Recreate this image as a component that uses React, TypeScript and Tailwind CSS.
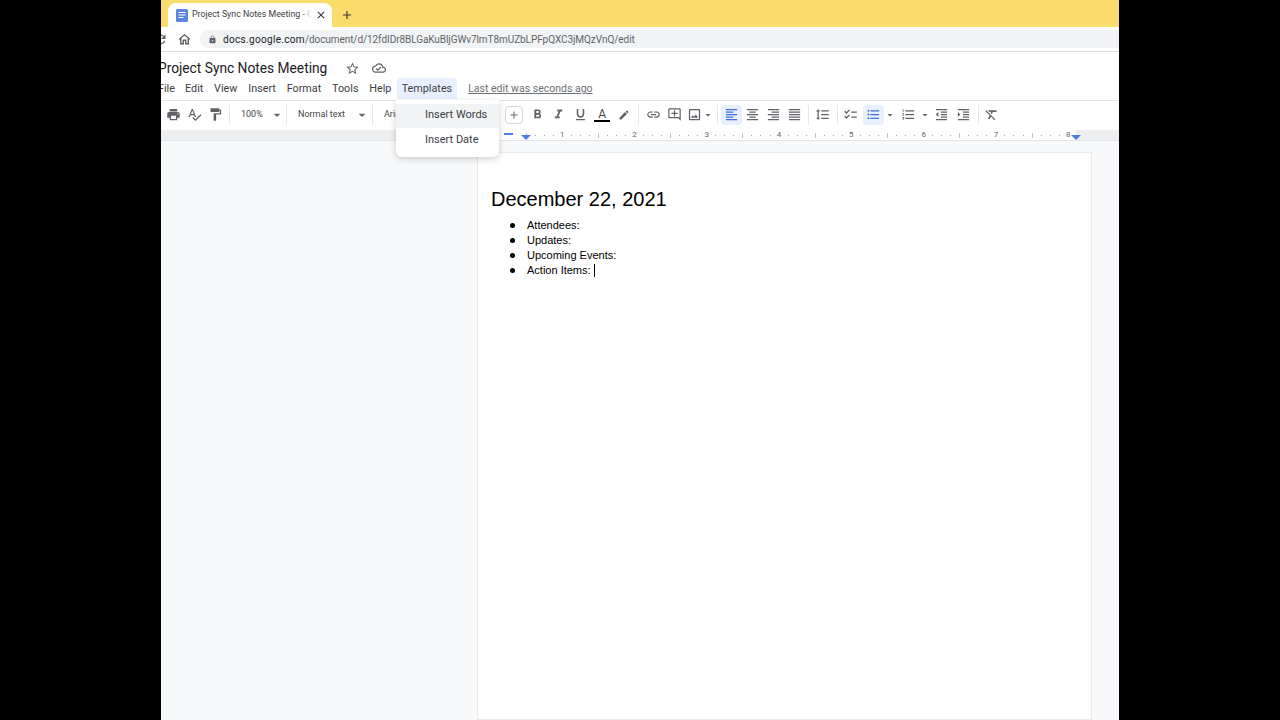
import React from "react";
import {
  MdAdd,
  MdArrowDropDown,
  MdChecklist,
  MdClose,
  MdEdit,
  MdFormatAlignCenter,
  MdFormatAlignJustify,
  MdFormatAlignLeft,
  MdFormatAlignRight,
  MdFormatBold,
  MdFormatClear,
  MdFormatIndentDecrease,
  MdFormatIndentIncrease,
  MdFormatItalic,
  MdFormatLineSpacing,
  MdFormatListBulleted,
  MdFormatListNumbered,
  MdFormatPaint,
  MdFormatUnderlined,
  MdLink,
  MdLock,
  MdOutlineAddComment,
  MdOutlineCloudDone,
  MdOutlineHome,
  MdOutlineImage,
  MdPrint,
  MdRefresh,
  MdSpellcheck,
  MdStarBorder,
} from "react-icons/md";

const menus = ["Edit", "View", "Insert", "Format", "Tools", "Help"];
const rulerNumbers = [1, 2, 3, 4, 5, 6, 7, 8];
const rulerCells = [0, 1, 2, 3, 4, 5, 6, 7];
const bullets = ["Attendees:", "Updates:", "Upcoming Events:", "Action Items:"];

const Divider = () => <div className="w-px h-5 bg-[#e3e5e8] shrink-0" />;

const Caret = () => (
  <MdArrowDropDown className="text-[#5f6368] w-4 h-4 shrink-0" />
);

const Tool: React.FC<{
  children: React.ReactNode;
  active?: boolean;
  className?: string;
}> = ({ children, active, className }) => (
  <div
    className={`w-[21px] h-5 flex items-center justify-center shrink-0 rounded-sm text-[15px] ${
      active ? "bg-[#e8f0fe] text-[#3f6fd8]" : "text-[#5f6368]"
    } ${className ?? ""}`}
  >
    {children}
  </div>
);

export default function App() {
  return (
    <div className="h-screen bg-black flex justify-center overflow-hidden font-['Roboto',sans-serif]">
      <div className="relative w-[958px] h-full bg-white overflow-hidden flex flex-col">
        {/* Tab strip */}
        <div className="h-[27px] bg-[#f9dc6c] flex items-end pl-[7px] shrink-0">
          <div className="w-[164px] h-6 bg-white rounded-t-lg flex items-center pl-[8px] pr-[5px]">
            <svg viewBox="0 0 12 13" className="w-3 h-[13px] shrink-0">
              <rect width="12" height="13" rx="1.5" fill="#5b84dc" />
              <path d="M2.5 3.5h7M2.5 6h7M2.5 8.5h5" stroke="#fff" strokeWidth="1.1" />
            </svg>
            <div className="relative ml-[4px] flex-1 overflow-hidden">
              <span className="block text-[8.8px] text-[#3c4043] whitespace-nowrap">
                Project Sync Notes Meeting - Goo
              </span>
              <div className="absolute right-0 top-0 w-[10px] h-full bg-gradient-to-r from-transparent to-white" />
            </div>
            <MdClose className="w-3 h-3 ml-[4px] text-[#303134] shrink-0" />
          </div>
          <MdAdd className="w-[14px] h-[14px] ml-2 mb-[5px] text-[#3c3c34]" />
        </div>

        {/* Address bar */}
        <div className="h-[25px] flex items-center border-b border-[#dadce0] shrink-0">
          <MdRefresh className="w-[15px] h-[15px] -ml-[8px] text-[#5f6368]" />
          <MdOutlineHome className="w-[15px] h-[15px] ml-[9px] text-[#4a4d51]" />
          <div className="ml-[8px] flex-1 h-[18px] bg-[#f1f3f4] rounded-l-full flex items-center pl-[8px]">
            <MdLock className="w-[9px] h-[9px] text-[#5f6368]" />
            <span className="ml-[6px] text-[10px] text-[#5f6368] whitespace-nowrap tracking-[-0.07px]">
              <span className="text-[#202124] tracking-[0.32px]">docs.google.com</span>
              /document/d/12fdIDr8BLGaKuBljGWv7lmT8mUZbLPFpQXC3jMQzVnQ/edit
            </span>
          </div>
        </div>

        {/* Title */}
        <div className="h-[26px] pt-[6px] flex items-center shrink-0">
          <span className="-ml-[3px] text-[13.75px] text-[#202124] whitespace-nowrap">
            Project Sync Notes Meeting
          </span>
          <MdStarBorder className="w-[15px] h-[15px] ml-[18px] text-[#5f6368]" />
          <MdOutlineCloudDone className="w-[14px] h-[14px] ml-[12px] text-[#5f6368]" />
        </div>

        {/* Menu bar */}
        <div className="h-[23px] flex items-center text-[10.8px] text-[#3c4043] shrink-0 border-b border-[#e3e5e8]">
          <span className="-ml-[3px] w-[27px] shrink-0">File</span>
          {menus.map((m) => (
            <span key={m} className="mr-[10.8px]">
              {m}
            </span>
          ))}
          <span className="-ml-[5.5px] h-[21px] pt-[1px] self-start px-[5px] flex items-center bg-[#e8f0fe] rounded-t-sm">
            Templates
          </span>
          <span className="ml-[11px] text-[10.5px] text-[#6b6f74] underline whitespace-nowrap">
            Last edit was seconds ago
          </span>
        </div>

        {/* Toolbar */}
        <div className="h-[29px] pb-[2px] flex items-center pl-[2px] shrink-0">
          <Tool>
            <MdPrint />
          </Tool>
          <Tool>
            <MdSpellcheck />
          </Tool>
          <Tool>
            <MdFormatPaint />
          </Tool>
          <div className="w-[3px]" />
          <Divider />
          <span className="ml-[11px] w-[28px] text-[9px] text-[#444746]">100%</span>
          <Caret />
          <div className="w-[1px]" />
          <Divider />
          <span className="ml-[11px] w-[56px] text-[9px] text-[#444746] whitespace-nowrap">
            Normal text
          </span>
          <Caret />
          <div className="w-[2px]" />
          <Divider />
          <span className="ml-[11px] w-[121px] text-[9px] text-[#444746]">Arial</span>
          <div className="w-[18px] h-[18px] border border-[#d5d7da] rounded-sm flex items-center justify-center shrink-0">
            <MdAdd className="w-3 h-3 text-[#5f6368]" />
          </div>
          <div className="w-[3.5px] shrink-0" />
          <Tool className="mr-[0.7px]">
            <MdFormatBold />
          </Tool>
          <Tool className="mr-[0.7px]">
            <MdFormatItalic />
          </Tool>
          <Tool className="mr-[0.7px]">
            <MdFormatUnderlined />
          </Tool>
          <Tool className="flex-col mr-[0.7px]">
            <span className="text-[12px] leading-[12px] text-[#444746]">A</span>
            <span className="w-[16px] h-[2px] bg-black" />
          </Tool>
          <Tool>
            <MdEdit className="w-3 h-3" />
          </Tool>
          <div className="w-[3.7px] shrink-0" />
          <Divider />
          <div className="w-[4.5px] shrink-0" />
          <Tool>
            <MdLink />
          </Tool>
          <Tool>
            <MdOutlineAddComment />
          </Tool>
          <Tool className="-ml-[1px]">
            <MdOutlineImage />
          </Tool>
          <MdArrowDropDown className="-ml-[3px] w-3 h-4 text-[#5f6368] shrink-0" />
          <div className="w-[2.5px] shrink-0" />
          <Divider />
          <div className="w-[3px] shrink-0" />
          <Tool active>
            <MdFormatAlignLeft />
          </Tool>
          <Tool>
            <MdFormatAlignCenter />
          </Tool>
          <Tool>
            <MdFormatAlignRight />
          </Tool>
          <Tool>
            <MdFormatAlignJustify />
          </Tool>
          <div className="w-[3px] shrink-0" />
          <Divider />
          <div className="w-[3.5px] shrink-0" />
          <Tool>
            <MdFormatLineSpacing />
          </Tool>
          <div className="w-[3.5px] shrink-0" />
          <Divider />
          <div className="w-[2.5px] shrink-0" />
          <Tool>
            <MdChecklist />
          </Tool>
          <div className="w-[1.5px] shrink-0" />
          <Tool active>
            <MdFormatListBulleted />
          </Tool>
          <MdArrowDropDown className="w-3 h-4 text-[#5f6368] shrink-0" />
          <div className="w-[2.5px] shrink-0" />
          <Tool>
            <MdFormatListNumbered />
          </Tool>
          <MdArrowDropDown className="-ml-[0.5px] w-3 h-4 text-[#5f6368] shrink-0" />
          <div className="w-[0.5px] shrink-0" />
          <Tool>
            <MdFormatIndentDecrease />
          </Tool>
          <div className="w-[1px] shrink-0" />
          <Tool>
            <MdFormatIndentIncrease />
          </Tool>
          <div className="w-[3.5px] shrink-0" />
          <Divider />
          <div className="w-[2.5px] shrink-0" />
          <Tool>
            <MdFormatClear />
          </Tool>
        </div>

        {/* Ruler */}
        <div className="h-[11px] bg-[#eceef0] border-b border-[#e3e5e8] flex shrink-0">
          <div className="w-[330px] shrink-0" />
          <div className="relative w-[585px] bg-white flex overflow-hidden">
            <div className="absolute left-[13px] top-[3px] w-[9px] h-[2px] bg-[#4f7fdc]" />
            <div className="absolute left-[30px] top-[5px] w-0 h-0 border-x-[5px] border-x-transparent border-t-[5px] border-t-[#4f7fdc]" />
            <div className="w-[30.5px] shrink-0" />
            {rulerNumbers.map((n) => (
              <div key={n} className="w-[72.3px] shrink-0 flex">
                {rulerCells.map((c) => (
                  <div key={c} className="w-[9.04px] h-[10px] shrink-0 flex items-center justify-center">
                    {c === 0 && <div className="w-px h-[5px] bg-[#bdc1c6]" />}
                    {c === 4 && (
                      <span className="text-[8px] leading-[10px] text-[#5f6368]">{n}</span>
                    )}
                    {c !== 0 && c !== 4 && <div className="w-px h-px bg-[#9aa0a6]" />}
                  </div>
                ))}
              </div>
            ))}
          </div>
          <div className="relative flex-1">
            <div className="absolute -left-[5px] top-[5px] w-0 h-0 border-x-[5px] border-x-transparent border-t-[5px] border-t-[#4f7fdc]" />
          </div>
        </div>

        {/* Document canvas */}
        <div className="flex-1 bg-[#f8f9fa] pt-[11px] pl-[316px] min-h-0">
          <div className="w-[615px] h-full bg-white border border-[#e8eaed] pt-[33px] pl-[13px] font-['Liberation_Sans',sans-serif] text-black">
            <h1 className="text-[20px] leading-[27px] font-normal">December 22, 2021</h1>
            <ul className="mt-[5px] text-[11px] leading-[14.9px]">
              {bullets.map((b, i) => (
                <li key={b} className="flex items-center">
                  <span className="ml-[19px] w-[8px] h-[5px] shrink-0 flex items-center">
                    <span className="w-[5px] h-[5px] rounded-full bg-black" />
                  </span>
                  <span className="ml-[9px]">{b}</span>
                  {i === bullets.length - 1 && (
                    <span className="ml-[3px] w-px h-[13px] bg-black" />
                  )}
                </li>
              ))}
            </ul>
          </div>
        </div>

        {/* Templates dropdown */}
        <div className="absolute left-[235px] top-[100px] w-[103px] h-[57px] bg-white rounded-b-md shadow-[0_2px_6px_rgba(60,64,67,0.25)] pt-[4px] text-[11px] text-[#3c4043]">
          <div className="h-[24px] bg-[#f1f3f4] flex items-center pl-[29px] pb-px">Insert Words</div>
          <div className="h-[24px] mt-[1px] flex items-center pl-[29px] pb-px">Insert Date</div>
        </div>
      </div>
    </div>
  );
}
